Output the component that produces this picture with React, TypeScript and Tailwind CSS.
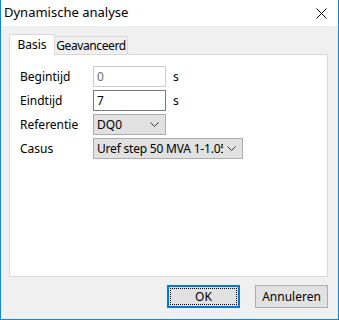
import React from 'react'

const font = { fontFamily: '"Segoe UI", "Noto Sans", sans-serif' }

function Chevron() {
  return (
    <svg width="9" height="5" viewBox="0 0 9 5" className="shrink-0">
      <polyline points="0.5,0.5 4.5,4.5 8.5,0.5" fill="none" stroke="#333" strokeWidth="1" />
    </svg>
  )
}

function Row({ label, children }: { label: string; children: React.ReactNode }) {
  return (
    <div className="flex items-center h-[21px]">
      <span className="w-[73px] shrink-0 text-[12px] text-black leading-none">{label}</span>
      {children}
    </div>
  )
}

export default function App() {
  return (
    <div
      className="w-[339px] h-[320px] flex flex-col bg-[#f0f0f0] border-x border-b border-[#1883d7] overflow-hidden"
      style={font}
    >
      {/* title bar */}
      <div className="h-[26px] shrink-0 bg-white flex items-center justify-between pl-[3px] pr-[11px]">
        <span className="text-[13px] text-black">Dynamische analyse</span>
        <svg width="11" height="11" viewBox="0 0 11 11">
          <path d="M0.5 0.5 L10.5 10.5 M10.5 0.5 L0.5 10.5" stroke="#000" strokeWidth="1" />
        </svg>
      </div>

      <div className="flex-1 flex flex-col pt-[8px] pl-[8px] pr-[10px] pb-[11px]">
        {/* tabs */}
        <div className="flex items-end h-[20px] relative z-10">
          <div className="w-[46px] h-[21px] -mb-px bg-white border-t border-x border-[#d9d9d9] flex items-center justify-center text-[12px] text-black">
            Basis
          </div>
          <div className="w-[73px] h-[18px] bg-[#f0f0f0] border-t border-r border-[#d9d9d9] flex items-center justify-center text-[12px] tracking-[-0.4px] text-black">
            Geavanceerd
          </div>
        </div>

        {/* panel */}
        <div className="h-[223px] shrink-0 bg-white border border-[#d9d9d9] pt-[11px] pl-[10px] flex flex-col gap-[3px]">
          <Row label="Begintijd">
            <div className="w-[73px] h-[21px] border border-[#cccccc] bg-white flex items-center px-[3px] text-[12px] text-[#6d6d6d]">0</div>
            <span className="ml-[7px] text-[12px] text-black">s</span>
          </Row>
          <Row label="Eindtijd">
            <div className="w-[73px] h-[21px] border border-[#7a7a7a] bg-white flex items-center px-[3px] text-[12px] text-black">7</div>
            <span className="ml-[7px] text-[12px] text-black">s</span>
          </Row>
          <Row label="Referentie">
            <div className="w-[73px] h-[21px] border border-[#adadad] bg-[#e1e1e1] flex items-center justify-between pl-[3px] pr-[6px] text-[12px] text-black">
              <span>DQ0</span>
              <Chevron />
            </div>
          </Row>
          <Row label="Casus">
            <div className="w-[150px] h-[21px] border border-[#adadad] bg-[#e1e1e1] flex items-center pl-[3px] pr-[6px] text-[12px] text-black">
              <span className="flex-1 overflow-hidden whitespace-nowrap tracking-[-0.2px]">Uref step 50 MVA 1-1.05-1.0</span>
              <span className="ml-[4px]"><Chevron /></span>
            </div>
          </Row>
        </div>

        {/* buttons */}
        <div className="mt-[8px] flex justify-end gap-[15px]">
          <button className="relative w-[73px] h-[23px] bg-[#e1e1e1] border-2 border-[#0078d7] text-[12px] text-black">
            OK
            <span className="absolute inset-[1px] border border-dotted border-black" />
          </button>
          <button className="w-[73px] h-[23px] bg-[#e1e1e1] border border-[#adadad] text-[12px] text-black">
            Annuleren
          </button>
        </div>
      </div>
    </div>
  )
}
